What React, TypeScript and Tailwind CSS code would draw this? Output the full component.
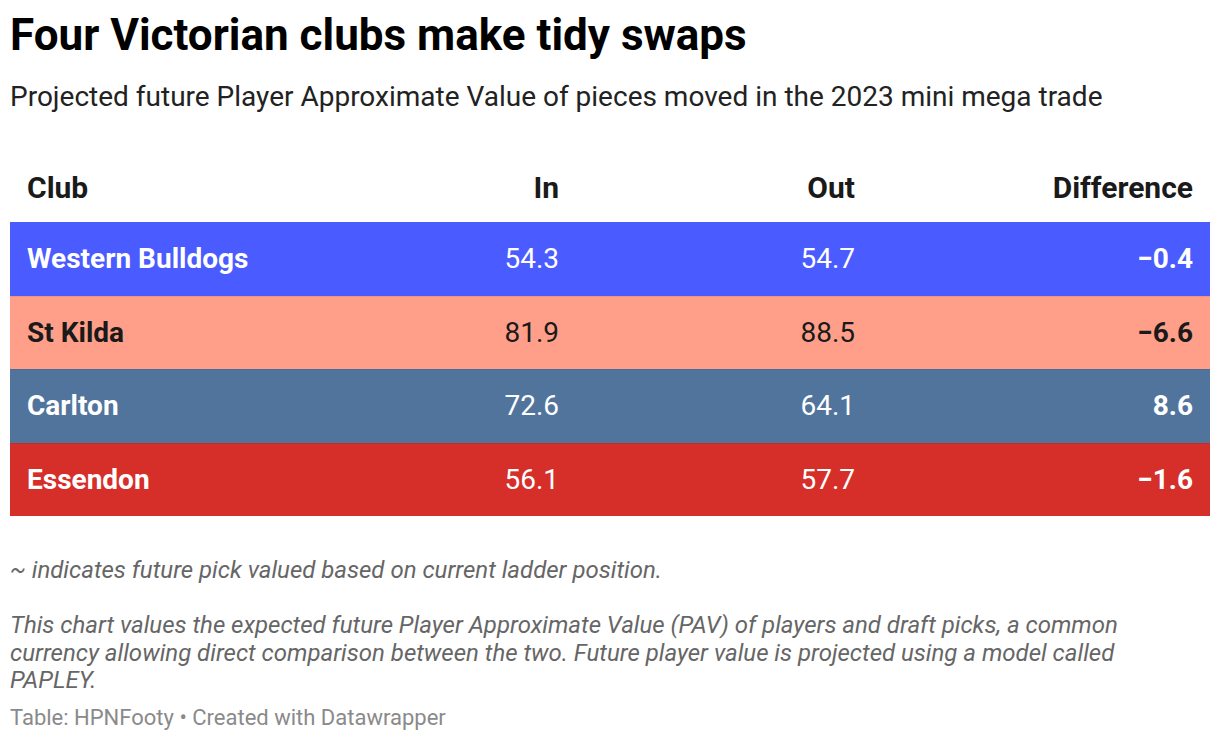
const rows = [
  { club: "Western Bulldogs", inn: "54.3", out: "54.7", diff: "−0.4", bg: "bg-[#4a5bff]", text: "text-white", border: "border-[#4453e8]" },
  { club: "St Kilda", inn: "81.9", out: "88.5", diff: "−6.6", bg: "bg-[#ff9f89]", text: "text-[#1a1a1a]", border: "border-[#ee9480]" },
  { club: "Carlton", inn: "72.6", out: "64.1", diff: "8.6", bg: "bg-[#51749d]", text: "text-white", border: "border-[#4b6b91]" },
  { club: "Essendon", inn: "56.1", out: "57.7", diff: "−1.6", bg: "bg-[#d62f2a]", text: "text-white", border: "border-[#c62b27]" },
];

export default function App() {
  return (
    <div className="w-[1220px] h-[742px] bg-white px-[10px] pt-[10px] font-['Roboto',sans-serif] text-[#181818]">
      <h1 className="text-[44px] leading-[50px] font-bold text-black">
        Four Victorian clubs make tidy swaps
      </h1>
      <p className="mt-[20px] text-[28px] leading-[34px] text-[#222]">
        Projected future Player Approximate Value of pieces moved in the 2023 mini mega trade
      </p>

      <div className="mt-[48px]">
        <div className="grid grid-cols-[1fr_200px_296px_338px] h-[60px] items-center px-[17px] pb-[10px] text-[30px] font-bold text-[#1a1a1a]">
          <div>Club</div>
          <div className="text-right">In</div>
          <div className="text-right">Out</div>
          <div className="text-right">Difference</div>
        </div>
        {rows.map((r, i) => (
          <div
            key={r.club}
            className={`grid grid-cols-[1fr_200px_296px_338px] h-[73.5px] items-center px-[17px] text-[28px] ${r.bg} ${r.text} ${i > 0 ? `border-t ${r.border}` : ""}`}
          >
            <div className="font-bold">{r.club}</div>
            <div className="text-right">{r.inn}</div>
            <div className="text-right">{r.out}</div>
            <div className="text-right font-bold">{r.diff}</div>
          </div>
        ))}
      </div>

      <p className="mt-[39px] text-[24px] leading-[30px] italic text-[#666]">
        ~ indicates future pick valued based on current ladder position.
      </p>
      <p className="mt-[27px] max-w-[1150px] text-[24px] leading-[27.5px] italic text-[#666]">
        This chart values the expected future Player Approximate Value (PAV) of players and draft picks, a common currency allowing direct comparison between the two. Future player value is projected using a model called PAPLEY.
      </p>
      <p className="mt-[10px] text-[22px] leading-[26px] text-[#8a8a8a]">
        Table: HPNFooty • Created with Datawrapper
      </p>
    </div>
  );
}
